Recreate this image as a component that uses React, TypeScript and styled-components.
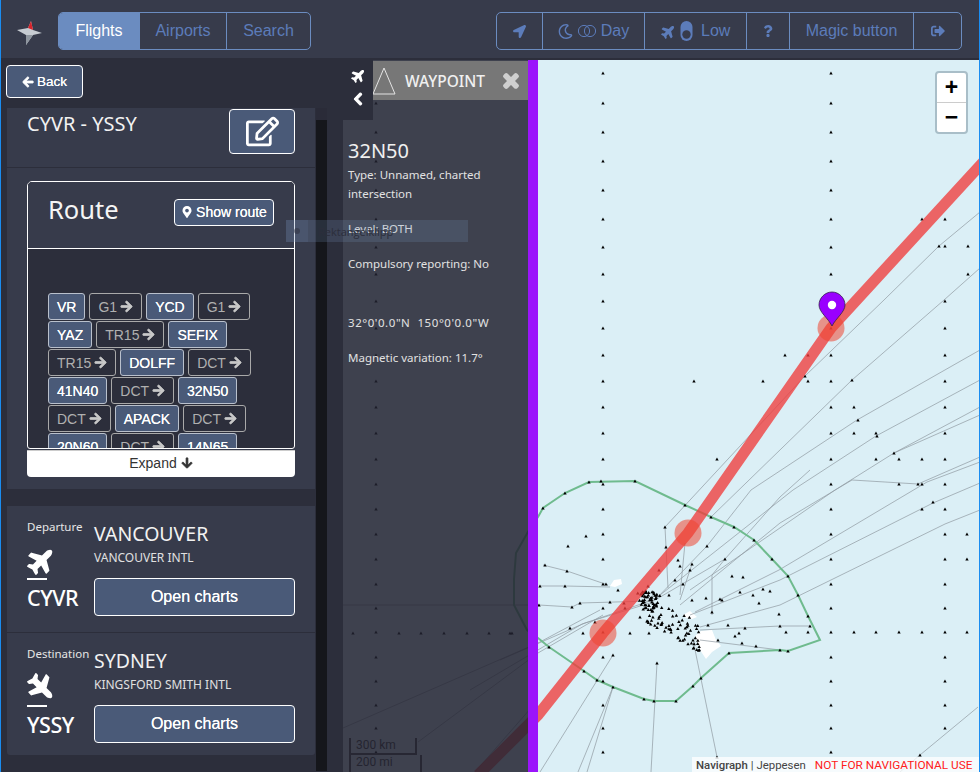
import React from "react";
import styled, { createGlobalStyle } from "styled-components";
import {
  FaArrowDown,
  FaArrowLeft,
  FaArrowRight,
  FaChevronLeft,
  FaLocationArrow,
  FaMapMarkerAlt,
  FaPlane,
  FaQuestion,
  FaRegEdit,
  FaRegMoon,
  FaSignOutAlt,
  FaTimes,
} from "react-icons/fa";

const ACCENT = "#6b8cc0";
const ACCENT_TEXT = "#5c7cba";
const PANEL = "#373b4b";
const DARK = "#2c2e3b";
const BUTTON = "#4a5a78";
const LABEL_FONT = `"Noto Sans", "Open Sans", sans-serif`;

const GlobalStyle = createGlobalStyle`
  html, body {
    margin: 0;
    padding: 0;
    background: ${DARK};
  }
  * {
    box-sizing: border-box;
  }
`;

const Page = styled.div`
  width: 980px;
  height: 772px;
  display: flex;
  flex-direction: column;
  overflow: hidden;
  background: ${DARK};
  border-left: 1px solid #1a8cf0;
  border-right: 1px solid #1a8cf0;
  font-family: "Liberation Sans", Arial, sans-serif;
`;

const Header = styled.header`
  height: 58px;
  flex: none;
  display: flex;
  align-items: center;
  padding: 4px 17px 0 14px;
  background: ${PANEL};
`;

const Logo = styled.svg`
  width: 28px;
  height: 26px;
  margin-right: 15px;
  margin-top: 4px;
`;

const NavGroup = styled.nav<{ $right?: boolean }>`
  display: flex;
  height: 38px;
  border: 1px solid ${ACCENT};
  border-radius: 5px;
  overflow: hidden;
  margin-left: ${(p) => (p.$right ? "auto" : "0")};
`;

const NavItem = styled.div<{ $active?: boolean; $w: number }>`
  width: ${(p) => p.$w}px;
  display: flex;
  align-items: center;
  justify-content: center;
  gap: 4px;
  font-size: 16px;
  color: ${(p) => (p.$active ? "#ffffff" : ACCENT_TEXT)};
  background: ${(p) => (p.$active ? ACCENT : "transparent")};
  & + & {
    border-left: 1px solid ${ACCENT};
  }
`;

const Main = styled.main`
  flex: 1;
  min-height: 0;
  margin-top: 2px;
  display: flex;
`;

const Sidebar = styled.aside`
  width: 342px;
  flex: none;
  display: flex;
  flex-direction: column;
  background: ${DARK};
`;

const BackBar = styled.div`
  height: 48px;
  flex: none;
  padding: 5px 5px;
`;

const ActionButton = styled.button`
  display: inline-flex;
  align-items: center;
  justify-content: center;
  gap: 3px;
  padding: 0;
  font-family: "Liberation Sans", Arial, sans-serif;
  font-size: 14px;
  color: #ffffff;
  background: ${BUTTON};
  border: 1px solid #ffffff;
  border-radius: 4px;
  text-shadow: 0 0 0.4px #ffffff;
`;

const BackButton = styled(ActionButton)`
  width: 77px;
  height: 33px;
  font-size: 13.5px;
`;

const SideBody = styled.div`
  flex: 1;
  min-height: 0;
  display: flex;
  padding-left: 6px;
`;

const SideColumn = styled.div`
  width: 308px;
  flex: none;
`;

const Track = styled.div`
  width: 11px;
  margin-left: 1px;
  flex: none;
  height: 663px;
  background: #15161b;
  border-top: 12px solid #2a2b38;
`;

const Card = styled.section`
  background: ${PANEL};
`;

const TitleRow = styled(Card)`
  height: 60px;
  display: flex;
  justify-content: space-between;
  padding: 1px 20px 0;
  border-bottom: 1px solid ${DARK};
`;

const TripTitle = styled.h2`
  margin: 2px 0 0;
  font-family: ${LABEL_FONT};
  font-size: 20px;
  font-weight: 400;
  line-height: 26px;
  color: #f2f2f2;
`;

const EditButton = styled(ActionButton)`
  width: 66px;
  height: 45px;
  font-size: 33px;
`;

const RouteSection = styled(Card)`
  height: 321px;
  padding: 13px 20px 0;
`;

const RouteBox = styled.div`
  height: 268px;
  border: 1px solid #ffffff;
  border-radius: 5px 5px 3px 3px;
  overflow: hidden;
  background: ${DARK};
`;

const RouteHead = styled.div`
  height: 67px;
  display: flex;
  align-items: center;
  justify-content: space-between;
  padding: 0 20px;
  background: ${PANEL};
  border-bottom: 1px solid #ffffff;
`;

const RouteTitle = styled.h3`
  margin: 0 0 12px;
  font-family: ${LABEL_FONT};
  font-size: 25.5px;
  font-weight: 400;
  color: #f5f5f5;
`;

const ShowRoute = styled(ActionButton)`
  width: 100px;
  height: 27px;
  margin-top: -6px;
`;

const ChipList = styled.div`
  display: flex;
  flex-wrap: wrap;
  column-gap: 4px;
  row-gap: 1px;
  padding: 44px 20px 0;
`;

const Chip = styled.span<{ $airway?: boolean }>`
  height: 27px;
  display: inline-flex;
  align-items: center;
  gap: 3px;
  padding: 0 8px;
  font-size: 14px;
  border: 1px solid ${(p) => (p.$airway ? "#a9a9a9" : "#b9c0cc")};
  border-radius: 3px;
  color: ${(p) => (p.$airway ? "#b0b0b0" : "#ffffff")};
  background: ${(p) => (p.$airway ? "transparent" : BUTTON)};
  text-shadow: ${(p) => (p.$airway ? "none" : "0 0 0.6px #fff")};
  svg {
    color: #c8c8c8;
    stroke: currentColor;
    stroke-width: 30px;
  }
`;

const ExpandButton = styled.button`
  width: 268px;
  height: 27px;
  margin-top: 1px;
  display: flex;
  align-items: center;
  justify-content: center;
  gap: 4px;
  padding: 0 0 2px;
  font-family: "Liberation Sans", Arial, sans-serif;
  font-size: 14px;
  color: #333333;
  background: #ffffff;
  border: none;
  border-top: 1px solid #cccccc;
  border-radius: 0 0 4px 4px;
  svg {
    stroke: currentColor;
    stroke-width: 30px;
  }
`;

const AirportGroup = styled.div`
  margin-top: 17px;
  border-radius: 0 0 3px 3px;
  overflow: hidden;
`;

const AirportCard = styled(Card)<{ $height: number }>`
  height: ${(p) => p.$height}px;
  display: grid;
  grid-template-columns: 67px 201px;
  padding: 13px 20px 0;
  &:not(:last-child) {
    border-bottom: 1px solid ${DARK};
  }
`;

const AirportSide = styled.div`
  display: flex;
  flex-direction: column;
  align-items: flex-start;
  color: #ffffff;
`;

const SideLabel = styled.span`
  font-family: ${LABEL_FONT};
  font-size: 11.5px;
  line-height: 16px;
  color: #e6e6e6;
  white-space: nowrap;
`;

const PlaneMark = styled.div`
  margin-top: 13px;
  width: 20px;
  height: 32px;
  display: flex;
  align-items: flex-start;
  border-bottom: 2px solid #ffffff;
`;

const BigPlane = styled(FaPlane)<{ $angle: number }>`
  font-size: 29px;
  flex: none;
  margin: -2px 0 0 0;
  transform: rotate(${(p) => p.$angle}deg);
`;

const IcaoCode = styled.span`
  margin-top: 4px;
  font-family: ${LABEL_FONT};
  font-size: 21.5px;
  font-weight: 500;
  line-height: 28px;
  letter-spacing: -0.5px;
  color: #ffffff;
`;

const AirportMain = styled.div`
  display: flex;
  flex-direction: column;
`;

const City = styled.h3`
  margin: 2px 0 0;
  font-family: ${LABEL_FONT};
  font-size: 19.5px;
  font-weight: 400;
  line-height: 26px;
  color: #f2f2f2;
`;

const AirportName = styled.span`
  margin-top: 3px;
  font-family: ${LABEL_FONT};
  font-size: 12px;
  line-height: 16px;
  color: #e0e0e0;
`;

const ChartsButton = styled(ActionButton)`
  width: 201px;
  height: 38px;
  margin-top: 12px;
  font-size: 16px;
`;

const MapPane = styled.div`
  flex: 1;
  position: relative;
  overflow: hidden;
  background: #dbeff6;
`;

const MapSvg = styled.svg`
  display: block;
`;

const ZoomControl = styled.div`
  position: absolute;
  top: 11px;
  right: 11px;
  width: 33px;
  height: 63px;
  display: flex;
  flex-direction: column;
  background: #ffffff;
  border: 2px solid #a9bec8;
  border-radius: 4px;
`;

const ZoomButton = styled.div`
  flex: 1;
  display: flex;
  align-items: center;
  justify-content: center;
  font-family: "Liberation Sans", Arial, sans-serif;
  font-size: 23px;
  font-weight: 700;
  line-height: 1;
  color: #000000;
  & + & {
    border-top: 1px solid #cccccc;
  }
`;

const Attribution = styled.div`
  position: absolute;
  right: 0;
  bottom: 0;
  width: 287px;
  height: 15px;
  padding-left: 4px;
  display: flex;
  align-items: center;
  font-family: Roboto, sans-serif;
  font-size: 11.4px;
  white-space: nowrap;
  color: #444444;
  background: rgba(255, 255, 255, 0.75);
  b {
    font-weight: 500;
    margin-right: 3px;
  }
`;

const Warning = styled.span`
  margin-left: 9px;
  font-size: 11.8px;
  color: #ff2020;
`;

const ScaleBar = styled.div`
  position: absolute;
  left: 6px;
  bottom: 0;
  font-family: Roboto, sans-serif;
  font-size: 12px;
  line-height: 14px;
  color: #333333;
`;

const ScaleStep = styled.div<{ $w: number; $top?: boolean }>`
  width: ${(p) => p.$w}px;
  height: 17px;
  padding-left: 5px;
  border: 2px solid #444444;
  border-width: ${(p) => (p.$top ? "0 2px 2px" : "0 2px 0")};
`;

const WaypointPanel = styled.div`
  position: absolute;
  top: 0;
  left: 0;
  bottom: 0;
  width: 195px;
  background: rgba(34, 34, 48, 0.85);
  border-right: 10px solid #9b14fb;
  color: #e8e8e8;
  font-family: ${LABEL_FONT};
`;

const PanelHead = styled.div`
  height: 39px;
  margin: 1px 0 0 29px;
  display: flex;
  align-items: center;
  padding: 0 7px 0 0;
  background: #777777;
  color: #f0f0f0;
  font-size: 15.5px;
  font-weight: 500;
  > svg:last-child {
    stroke: currentColor;
    stroke-width: 50px;
  }
`;

const HeadTitle = styled.span`
  margin: 0 auto 0 9px;
`;

const PanelToggle = styled.div`
  position: absolute;
  top: 0;
  left: 0;
  width: 30px;
  height: 60px;
  padding-top: 8px;
  display: flex;
  flex-direction: column;
  align-items: center;
  gap: 9px;
  color: #ffffff;
  background: ${DARK};
`;

const PanelBody = styled.div`
  padding: 38px 5px 0;
`;

const WaypointName = styled.h2`
  margin: 0 0 1px;
  font-size: 20px;
  font-weight: 400;
  line-height: 26px;
  color: #f0f0f0;
`;

const InfoLine = styled.p<{ $gap?: number; $wide?: boolean }>`
  margin: ${(p) => p.$gap ?? 0}px 0 0;
  font-size: 11.5px;
  line-height: 19px;
  letter-spacing: ${(p) => (p.$wide ? "0.55px" : "0")};
  color: #e2e2e2;
  white-space: pre-wrap;
`;

const SnipHint = styled.div`
  position: absolute;
  top: 220px;
  left: 286px;
  width: 182px;
  height: 22px;
  display: flex;
  align-items: center;
  font-family: "Open Sans", sans-serif;
  font-size: 11px;
  color: #2c2e3b;
  background: rgba(120, 150, 190, 0.2);
  pointer-events: none;
`;

const SnipIcon = styled.span`
  width: 22px;
  height: 22px;
  margin-right: 10px;
  display: flex;
  align-items: center;
  justify-content: center;
  background: rgba(120, 150, 190, 0.12);
  &::before {
    content: "";
    width: 6px;
    height: 6px;
    border-radius: 50%;
    background: rgba(44, 46, 59, 0.5);
  }
`;

const chips: { label: string; airway?: boolean }[] = [
  { label: "VR" },
  { label: "G1", airway: true },
  { label: "YCD" },
  { label: "G1", airway: true },
  { label: "YAZ" },
  { label: "TR15", airway: true },
  { label: "SEFIX" },
  { label: "TR15", airway: true },
  { label: "DOLFF" },
  { label: "DCT", airway: true },
  { label: "41N40" },
  { label: "DCT", airway: true },
  { label: "32N50" },
  { label: "DCT", airway: true },
  { label: "APACK" },
  { label: "DCT", airway: true },
  { label: "20N60" },
  { label: "DCT", airway: true },
  { label: "14N65" },
];

const gridRows = [
  73, 103, 132, 161, 190, 219, 247, 274, 301, 328, 355, 381, 407, 433, 459, 484,
  509, 534, 559, 584, 608, 632, 657, 681, 705, 728, 752,
];

// loose waypoints picked off the chart
const waypoints: number[][] = [
  [922, 219], [945, 219], [939, 246], [945, 246], [968, 246], [968, 274],
  [785, 355], [808, 355], [694, 381], [763, 381], [805, 376], [808, 381],
  [852, 380], [854, 407], [858, 420], [854, 433], [876, 433], [877, 436],
  [717, 459], [876, 459], [899, 459], [922, 459], [894, 453], [899, 484],
  [918, 484], [922, 484], [933, 502], [922, 509], [967, 534], [967, 559],
  [589, 482], [635, 481], [601, 481], [786, 632], [808, 632], [854, 632],
  [876, 632], [899, 632], [922, 632], [967, 632], [920, 755], [567, 571],
  [545, 565], [586, 536], [568, 546], [540, 586], [565, 586], [539, 605],
  [572, 607], [580, 603], [610, 602], [624, 603], [549, 647], [584, 671],
  [597, 680], [613, 687], [644, 699], [654, 701], [676, 701], [693, 686],
  [701, 678], [729, 653], [780, 650], [788, 651], [808, 616], [798, 595],
  [788, 576], [772, 559], [754, 540], [734, 527], [711, 517], [685, 505],
  [565, 493], [543, 508], [613, 655], [657, 663], [665, 527], [666, 547],
  [707, 546], [725, 559], [692, 564], [680, 566], [732, 576], [743, 577],
  [712, 612], [720, 599], [740, 592], [753, 595], [763, 589], [770, 591],
  [759, 603], [779, 614], [780, 626], [810, 626], [739, 633], [745, 628],
  [735, 636], [742, 643], [756, 646], [693, 640], [717, 757], [659, 570],
  [678, 560], [690, 570], [675, 580], [669, 595], [683, 584], [692, 600],
  [706, 598], [722, 600], [728, 625], [718, 640], [708, 625], [618, 590],
  [648, 586], [606, 584], [570, 628], [583, 633], [630, 633], [649, 633],
  [625, 608], [640, 617], [595, 622], [510, 633],
];

// deterministic scatter for the dense knot around the islands
function seeded(count: number, seed: number, build: (t: number, u: number) => number[]) {
  const out: number[][] = [];
  let s = seed;
  const next = () => {
    s = (s * 9301 + 49297) % 233280;
    return s / 233280;
  };
  for (let i = 0; i < count; i += 1) {
    out.push(build(next(), next() - 0.5));
  }
  return out;
}

const knot = [
  ...seeded(45, 77, (t, u) => [640 + t * 20, 596 + u * 16 + t * 6]),
  ...seeded(80, 31, (t, u) => [640 + t * 62 + u * 10, 608 + t * 30 + u * 34]),
];

const airways: number[][][] = [
  [[665, 527], [805, 376], [884, 300], [939, 246], [980, 212]],
  [[711, 517], [852, 380], [944, 300], [980, 268]],
  [[655, 600], [707, 546], [751, 490], [857, 420], [980, 350]],
  [[650, 603], [793, 490], [876, 436], [980, 380]],
  [[690, 590], [835, 490], [894, 453], [980, 407]],
  [[894, 453], [980, 415]],
  [[650, 603], [725, 559], [780, 497], [810, 470]],
  [[680, 605], [780, 523], [852, 480], [918, 484], [980, 457]],
  [[695, 612], [779, 570], [927, 482], [980, 462]],
  [[690, 615], [780, 580], [933, 503], [980, 483]],
  [[700, 627], [780, 605], [945, 524], [980, 510]],
  [[665, 527], [666, 547], [668, 588]],
  [[692, 564], [680, 600]],
  [[685, 543], [680, 595]],
  [[725, 559], [712, 575], [712, 615]],
  [[543, 565], [567, 571], [608, 585]],
  [[540, 586], [565, 586], [610, 587]],
  [[539, 605], [572, 607], [580, 603], [650, 601]],
  [[343, 605], [539, 605]],
  [[500, 660], [585, 623], [650, 601]],
  [[470, 690], [582, 624], [650, 603]],
  [[613, 655], [540, 772]],
  [[613, 687], [578, 772]],
  [[613, 687], [587, 772]],
  [[657, 663], [651, 772]],
  [[693, 640], [717, 757]],
  [[700, 630], [780, 626], [810, 626]],
  [[700, 640], [788, 651]],
  [[920, 755], [978, 707]],
  [[900, 772], [920, 755]],
  [[418, 742], [538, 653], [603, 615]],
  [[343, 728], [538, 643], [600, 610]],
  [[538, 700], [475, 772]],
];

const greenPath =
  "538,517 543,508 565,493 589,482 635,481 685,505 711,517 734,527 754,540 772,559 788,576 798,595 808,616 820,640 788,651 780,650 729,653 701,678 693,686 676,701 654,701 644,699 613,687 597,680 584,671 549,647 538,638 527,630 514,605 514,579 516,553 529,530";

const Triangle = ({ x, y }: { x: number; y: number }) => (
  <polygon points={`${x - 1.7},${y + 1.4} ${x},${y - 1.6} ${x + 1.7},${y + 1.4}`} />
);

function ChartLayer() {
  return (
    <MapSvg width={636} height={712} viewBox="343 60 636 712">
      <g fill="#ffffff">
        <polygon points="695,636 701,631 712,630 716,640 721,646 712,652 706,659 700,650" />
        <polygon points="683,615 690,611 697,617 692,619 686,618" />
        <polygon points="610,586 614,580 621,579 622,584 615,587" />
      </g>
      <g fill="none" stroke="#8f9aa0" strokeWidth={0.7}>
        {airways.map((line, i) => (
          <polyline key={i} points={line.map((p) => p.join(",")).join(" ")} />
        ))}
      </g>
      <polygon points={greenPath} fill="none" stroke="#6fbb8e" strokeWidth={2} />
      <g fill="#000000">
        {gridRows.map((y) => (
          <Triangle key={y} x={376} y={y} />
        ))}
        {[353, 399, 421, 444, 467, 489, 512, 535].map((x) => (
          <Triangle key={x} x={x} y={633} />
        ))}
        {gridRows.map((y) => (
          <Triangle key={`a${y}`} x={603} y={y} />
        ))}
        {gridRows.map((y) => (
          <Triangle key={`b${y}`} x={831} y={y} />
        ))}
        {gridRows.slice(8, 26).map((y) => (
          <Triangle key={`c${y}`} x={945} y={y} />
        ))}
        {waypoints.map(([x, y], i) => (
          <Triangle key={`w${i}`} x={x} y={y} />
        ))}
        {knot.map(([x, y], i) => (
          <Triangle key={`k${i}`} x={x} y={y} />
        ))}
      </g>
      <polyline
        points="985,160 831,328 688,533 603,633 538,715 478,775"
        fill="none"
        stroke="rgba(240, 60, 60, 0.78)"
        strokeWidth={11}
      />
      <g fill="rgba(238, 70, 50, 0.55)">
        <circle cx={831} cy={328} r={13.5} />
        <circle cx={688} cy={533} r={13.5} />
        <circle cx={603} cy={633} r={13.5} />
      </g>
      <path
        d="M832 326 C828 318 819 312 819 305 C819 298 825 292 832 292 C839 292 845 298 845 305 C845 312 836 318 832 326 Z"
        fill="#9900ff"
        stroke="#33224a"
        strokeWidth={0.8}
      />
      <circle cx={832} cy={305} r={4.2} fill="#ffffff" />
    </MapSvg>
  );
}

const PlaneIcon = styled(FaPlane)`
  transform: rotate(-45deg);
`;

const NavSvg = styled.svg`
  flex: none;
`;

const ThickArrow = styled(FaArrowLeft)`
  stroke: currentColor;
  stroke-width: 40px;
`;

const ThickChevron = styled(FaChevronLeft)`
  stroke: currentColor;
  stroke-width: 40px;
`;

function DayToggleIcon() {
  return (
    <NavSvg width={20} height={14} viewBox="0 0 20 14" fill="none" stroke={ACCENT_TEXT}>
      <circle cx={7} cy={7} r={5.6} />
      <circle cx={13} cy={7} r={5.6} />
    </NavSvg>
  );
}

function LowToggleIcon() {
  return (
    <NavSvg width={13} height={20} viewBox="0 0 13 20">
      <rect x={0.5} y={0} width={12} height={20} rx={6} fill={ACCENT_TEXT} />
      <circle cx={6.5} cy={13.5} r={4.2} fill={PANEL} />
    </NavSvg>
  );
}

export default function App() {
  return (
    <Page>
      <GlobalStyle />
      <Header>
        <Logo viewBox="0 0 28 26">
          <polygon points="2,10 13,8 16,1 18,10 27,13 18,15 11,25 11,15" fill="#c7ccd2" />
          <polygon points="11,15 11,25 18,15" fill="#8f969f" />
          <polygon points="13,8 16,1 18,10" fill="#d8232a" />
        </Logo>
        <NavGroup>
          <NavItem $active $w={80}>Flights</NavItem>
          <NavItem $w={87}>Airports</NavItem>
          <NavItem $w={84}>Search</NavItem>
        </NavGroup>
        <NavGroup $right>
          <NavItem $w={45}>
            <FaLocationArrow size={13} />
          </NavItem>
          <NavItem $w={102}>
            <FaRegMoon size={15} />
            <DayToggleIcon />
            Day
          </NavItem>
          <NavItem $w={102}>
            <PlaneIcon size={15} />
            <LowToggleIcon />
            <span>&nbsp;Low</span>
          </NavItem>
          <NavItem $w={43}>
            <FaQuestion size={12} />
          </NavItem>
          <NavItem $w={124}>Magic button</NavItem>
          <NavItem $w={48}>
            <FaSignOutAlt size={14} />
          </NavItem>
        </NavGroup>
      </Header>
      <Main>
        <Sidebar>
          <BackBar>
            <BackButton>
              <ThickArrow size={12} />
              Back
            </BackButton>
          </BackBar>
          <SideBody>
            <SideColumn>
              <TitleRow>
                <TripTitle>CYVR - YSSY</TripTitle>
                <EditButton>
                  <FaRegEdit />
                </EditButton>
              </TitleRow>
              <RouteSection>
                <RouteBox>
                  <RouteHead>
                    <RouteTitle>Route</RouteTitle>
                    <ShowRoute>
                      <FaMapMarkerAlt size={12} />
                      Show route
                    </ShowRoute>
                  </RouteHead>
                  <ChipList>
                    {chips.map((chip, i) => (
                      <Chip key={i} $airway={chip.airway}>
                        {chip.label}
                        {chip.airway && <FaArrowRight size={13} />}
                      </Chip>
                    ))}
                  </ChipList>
                </RouteBox>
                <ExpandButton>
                  Expand
                  <FaArrowDown size={12} />
                </ExpandButton>
              </RouteSection>
              <AirportGroup>
                <AirportCard $height={127}>
                  <AirportSide>
                    <SideLabel>Departure</SideLabel>
                    <PlaneMark>
                      <BigPlane $angle={-45} />
                    </PlaneMark>
                    <IcaoCode>CYVR</IcaoCode>
                  </AirportSide>
                  <AirportMain>
                    <City>VANCOUVER</City>
                    <AirportName>VANCOUVER INTL</AirportName>
                    <ChartsButton>Open charts</ChartsButton>
                  </AirportMain>
                </AirportCard>
                <AirportCard $height={122}>
                  <AirportSide>
                    <SideLabel>Destination</SideLabel>
                    <PlaneMark>
                      <BigPlane $angle={45} />
                    </PlaneMark>
                    <IcaoCode>YSSY</IcaoCode>
                  </AirportSide>
                  <AirportMain>
                    <City>SYDNEY</City>
                    <AirportName>KINGSFORD SMITH INTL</AirportName>
                    <ChartsButton>Open charts</ChartsButton>
                  </AirportMain>
                </AirportCard>
              </AirportGroup>
            </SideColumn>
            <Track />
          </SideBody>
        </Sidebar>
        <MapPane>
          <ChartLayer />
          <ZoomControl>
            <ZoomButton>+</ZoomButton>
            <ZoomButton>−</ZoomButton>
          </ZoomControl>
          <Attribution>
            <b>Navigraph</b>| Jeppesen
            <Warning>NOT FOR NAVIGATIONAL USE</Warning>
          </Attribution>
          <ScaleBar>
            <ScaleStep $w={68} $top>300 km</ScaleStep>
            <ScaleStep $w={73}>200 mi</ScaleStep>
          </ScaleBar>
          <WaypointPanel>
            <PanelHead>
              <svg width={24} height={28} viewBox="0 0 24 28" fill="none" stroke="#e4e4e4">
                <polygon points="12,1 23,27 1,27" />
              </svg>
              <HeadTitle>WAYPOINT</HeadTitle>
              <FaTimes size={20} color="#cfcfcf" />
            </PanelHead>
            <PanelToggle>
              <PlaneIcon size={15} />
              <ThickChevron size={14} />
            </PanelToggle>
            <PanelBody>
              <WaypointName>32N50</WaypointName>
              <InfoLine>Type: Unnamed, charted intersection</InfoLine>
              <InfoLine $gap={16}>Level: BOTH</InfoLine>
              <InfoLine $gap={16}>Compulsory reporting: No</InfoLine>
              <InfoLine $gap={40} $wide>{"32°0'0.0\"N  150°0'0.0\"W"}</InfoLine>
              <InfoLine $gap={16}>Magnetic variation: 11.7°</InfoLine>
            </PanelBody>
          </WaypointPanel>
        </MapPane>
      </Main>
      <SnipHint>
        <SnipIcon />
        Rektangelklipp
      </SnipHint>
    </Page>
  );
}
